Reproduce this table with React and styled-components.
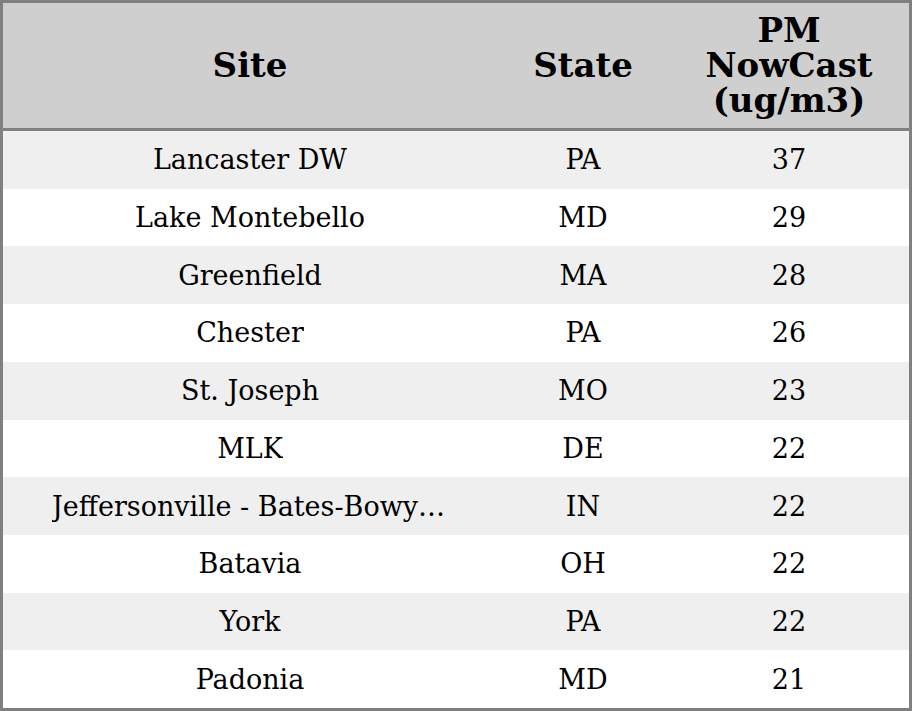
import React from "react";
import styled, { createGlobalStyle } from "styled-components";

const Global = createGlobalStyle`
  html, body { margin: 0; padding: 0; background: #fff; }
  body { font-family: "DejaVu Serif", serif; }
`;

const Table = styled.div`
  box-sizing: border-box;
  width: 912px;
  height: 711px;
  border: 3px solid #808080;
  display: grid;
  grid-template-columns: 494px 172px 1fr;
  grid-template-rows: 128px repeat(10, 1fr);
  font-family: "DejaVu Serif", serif;
  color: #000;
`;

const HeadCell = styled.div`
  box-sizing: border-box;
  background: #cfcfcf;
  border-bottom: 3px solid #808080;
  display: flex;
  align-items: center;
  justify-content: center;
  text-align: center;
  font-weight: bold;
  font-size: 34px;
  line-height: 35px;
  padding-bottom: 1px;
`;

const Cell = styled.div`
  box-sizing: border-box;
  background: ${(p) => (p.$odd ? "#efefef" : "#ffffff")};
  display: flex;
  align-items: center;
  justify-content: center;
  font-size: 27px;
  padding: 0 49px;
  min-width: 0;
`;

const Text = styled.span`
  white-space: nowrap;
  overflow: hidden;
  text-overflow: ellipsis;
`;

const rows = [
  ["Lancaster DW", "PA", "37"],
  ["Lake Montebello", "MD", "29"],
  ["Greenfield", "MA", "28"],
  ["Chester", "PA", "26"],
  ["St. Joseph", "MO", "23"],
  ["MLK", "DE", "22"],
  ["Jeffersonville - Bates-Bowyer Ave", "IN", "22"],
  ["Batavia", "OH", "22"],
  ["York", "PA", "22"],
  ["Padonia", "MD", "21"],
];

export default function App() {
  return (
    <>
      <Global />
      <Table>
        <HeadCell>Site</HeadCell>
        <HeadCell>State</HeadCell>
        <HeadCell>
          PM
          <br />
          NowCast
          <br />
          (ug/m3)
        </HeadCell>
        {rows.map((r, i) =>
          r.map((v, j) => (
            <Cell key={`${i}-${j}`} $odd={i % 2 === 0}>
              <Text>{v}</Text>
            </Cell>
          ))
        )}
      </Table>
    </>
  );
}
